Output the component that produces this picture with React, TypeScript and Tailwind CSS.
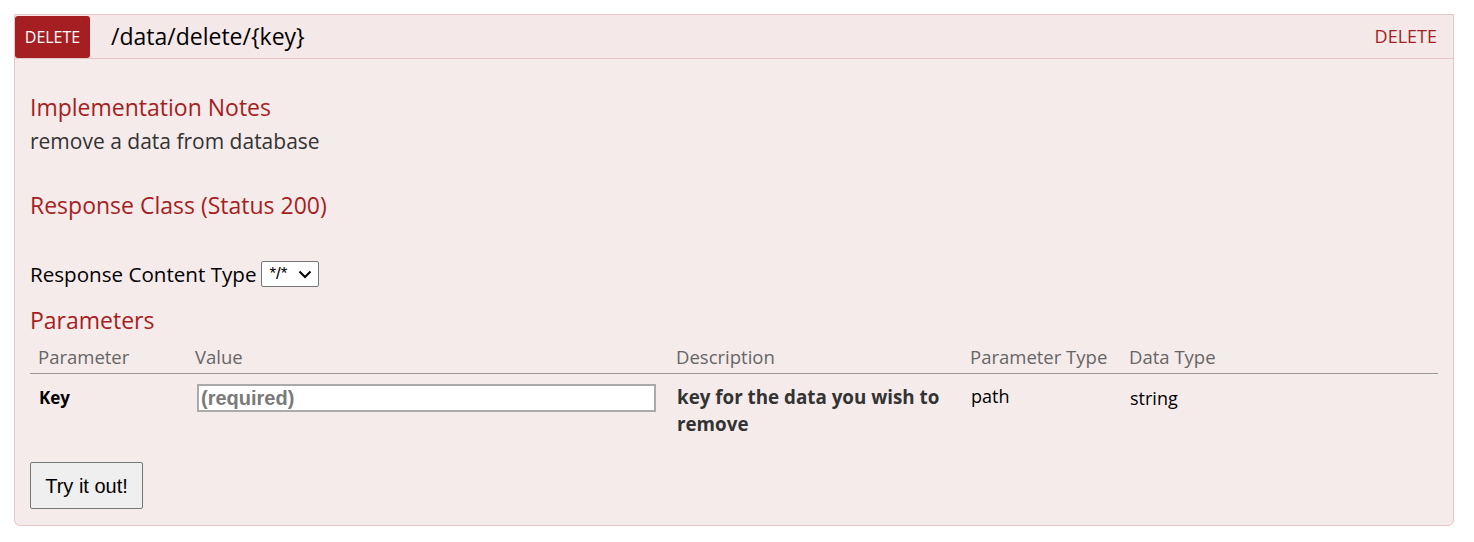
import React from 'react';

const font = { fontFamily: '"Open Sans", "DejaVu Sans", sans-serif' };
const arial = { fontFamily: '"Liberation Sans", Arial, sans-serif' };

export default function App() {
  return (
    <div className="min-h-screen bg-white pt-[14px] px-[14px] pb-[16px]" style={font}>
      <div className="border border-[#e8c6c7] bg-[#f5ebeb] rounded-b-[6px] w-[1440px]">
        {/* heading */}
        <div className="flex items-center h-[44px] border-b border-[#e8c6c7] bg-[#f5e8e8]">
          <span className="flex items-center justify-center h-[42px] w-[75px] bg-[#a41e22] text-white text-[16px] rounded-[3px]">
            DELETE
          </span>
          <span className="ml-[21px] text-[23px] text-black">/data/delete/&#123;key&#125;</span>
          <span className="ml-auto mr-[16px] text-[18px] text-[#a41e22]">DELETE</span>
        </div>

        {/* content */}
        <div className="px-[15px] pt-[32px] pb-[16px]">
          <h4 className="text-[23px] leading-[32px] text-[#a41e22]">Implementation Notes</h4>
          <p className="mt-[2px] text-[21px] leading-[32px] text-[#333]">remove a data from database</p>

          <h4 className="mt-[32px] text-[23px] leading-[32px] text-[#a41e22]">Response Class (Status 200)</h4>

          <div className="mt-[40px] flex items-center h-[26px] text-[20.6px] text-black">
            <span>Response Content Type</span>
            <span className="ml-[5px] flex items-center h-[26px] w-[58px] border border-[#767676] bg-white rounded-[2px] pl-[7px] pr-[6px] text-[17px]" style={arial}>
              */*
              <svg className="ml-auto" width="14" height="9" viewBox="0 0 14 9">
                <path d="M1.5 1.5l5.5 5.5 5.5-5.5" fill="none" stroke="#000" strokeWidth="2" />
              </svg>
            </span>
          </div>

          <h4 className="mt-[17px] text-[23px] leading-[32px] text-[#a41e22]">Parameters</h4>

          <table className="mt-[6px] w-full border-collapse table-fixed">
            <colgroup>
              <col className="w-[157px]" />
              <col className="w-[481px]" />
              <col className="w-[294px]" />
              <col className="w-[159px]" />
              <col />
            </colgroup>
            <thead>
              <tr className="border-b border-[#999] text-left text-[#666] text-[18.5px] leading-[25px]">
                <th className="font-normal px-[8px] pt-[2px] pb-[4px]">Parameter</th>
                <th className="font-normal px-[8px] pt-[2px] pb-[4px]">Value</th>
                <th className="font-normal px-[8px] pt-[2px] pb-[4px]">Description</th>
                <th className="font-normal px-[8px] pt-[2px] pb-[4px]">Parameter Type</th>
                <th className="font-normal px-[8px] pt-[2px] pb-[4px]">Data Type</th>
              </tr>
            </thead>
            <tbody>
              <tr className="align-top">
                <td className="px-[9px] pt-[10px] text-[17px] font-bold text-black leading-[27px]">Key</td>
                <td className="px-[8px] pt-[10px]">
                  <input
                    type="text"
                    placeholder="(required)"
                    className="ml-[2px] w-[459px] h-[28px] border-2 border-[#aaa] bg-white px-[2px] text-[20px] font-bold placeholder:text-[#7a7a7a] outline-none"
                    style={arial}
                  />
                </td>
                <td className="pl-[9px] pr-[8px] pt-[10px] text-[18.8px] font-bold text-[#333] leading-[27px]">
                  key for the data you wish to remove
                </td>
                <td className="px-[9px] pt-[9px] text-[18px] text-black leading-[27px]">path</td>
                <td className="px-[9px] pt-[11px] text-[18px] text-black leading-[27px]">string</td>
              </tr>
            </tbody>
          </table>

          <button
            className="mt-[24px] h-[47px] w-[113px] border border-[#767676] bg-[#efefef] rounded-[2px] text-[20px] text-black"
            style={arial}
          >
            Try it out!
          </button>
        </div>
      </div>
    </div>
  );
}
